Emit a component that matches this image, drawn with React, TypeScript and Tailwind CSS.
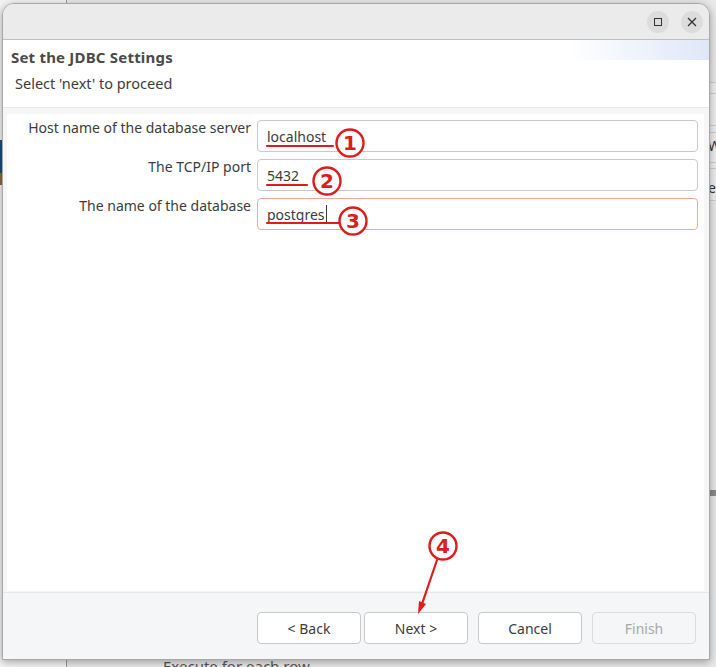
import React from "react";

const font = { fontFamily: '"Noto Sans", "Open Sans", sans-serif' };

function Field({ label, value, focused }: { label: string; value: string; focused?: boolean }) {
  return (
    <div className="flex items-start">
      <div className="w-[244px] shrink-0 text-right text-[14px] leading-[20px] text-[#3c3c3c]">{label}</div>
      <div
        className={
          "ml-[6px] mt-[2px] flex h-[32px] flex-1 items-center rounded-[4px] border bg-white pl-[9px] text-[14px] text-[#3c3c3c] " +
          (focused ? "border-[#f0a898]" : "border-[#c9c9c9]")
        }
      >
        <span>{value}</span>
        {focused && <span className="ml-[1px] inline-block h-[18px] w-[1px] bg-[#3c3c3c]" />}
      </div>
    </div>
  );
}

function Btn({ children, disabled, cls }: { children: React.ReactNode; disabled?: boolean; cls?: string }) {
  return (
    <div
      className={
        "flex h-[32px] w-[104px] items-center justify-center rounded-[4px] border text-[14px] " +
        (disabled ? "border-[#dcdcdc] bg-[#f5f6f7] text-[#a8a8a8] " : "border-[#c8c8c8] bg-white text-[#3c3c3c] ") +
        (cls || "")
      }
    >
      {children}
    </div>
  );
}

export default function App() {
  return (
    <div className="relative h-[667px] w-[716px] overflow-hidden bg-[#e9e9e9]" style={font}>
      {/* background app fragments */}
      <div className="absolute left-0 top-0 h-[667px] w-[67px] border-r border-[#9a9a9a] bg-[#f4f4f4]" />
      <div className="absolute left-0 top-[140px] h-[33px] w-[3px] bg-[#1d4e7e]" />
      <div className="absolute left-0 top-[173px] h-[12px] w-[3px] bg-[#8a6a3a]" />
      <div className="absolute left-[163px] top-[656px] text-[15px] leading-[20px] text-[#555]">Execute for each row.</div>
      <div className="absolute right-0 top-[82px] h-[120px] w-[8px] bg-[#efefef]">
        <div className="absolute left-0 top-0 h-[1px] w-full bg-[#cfcfcf]" />
        <div className="absolute left-0 top-[11px] h-[1px] w-full bg-[#cfcfcf]" />
        <div className="absolute left-0 top-[43px] h-[1px] w-full bg-[#cfcfcf]" />
        <div className="absolute left-0 top-[50px] h-[1px] w-full bg-[#cfcfcf]" />
        <div className="absolute left-0 top-[80px] h-[1px] w-full bg-[#cfcfcf]" />
        <div className="absolute left-0 top-[86px] h-[1px] w-full bg-[#cfcfcf]" />
        <div className="absolute left-0 top-[118px] h-[1px] w-full bg-[#cfcfcf]" />
        <div className="absolute left-0 top-[54px] text-[14px] leading-[20px] text-[#333]">Wi</div>
        <div className="absolute left-0 top-[96px] text-[14px] leading-[20px] text-[#333]">er</div>
      </div>
      <div className="absolute right-0 top-[490px] h-[6px] w-[8px] bg-[#8a8a8a]" />

      {/* dialog window */}
      <div className="absolute left-[2px] top-[3px] flex h-[657px] w-[708px] flex-col overflow-hidden rounded-t-[12px] border border-[#a8a8a8] bg-[#f6f6f7] shadow-[0_2px_8px_rgba(0,0,0,0.35)]">
        {/* title bar */}
        <div className="flex h-[36px] shrink-0 items-center justify-end gap-[12px] border-b border-[#bfbfbf] bg-[#ebebeb] pr-[6px]">
          <div className="flex h-[22px] w-[22px] items-center justify-center rounded-full bg-[#dcdcdc]">
            <div className="h-[8px] w-[8px] border border-[#333]" />
          </div>
          <div className="flex h-[22px] w-[22px] items-center justify-center rounded-full bg-[#dcdcdc]">
            <svg width="10" height="10" viewBox="0 0 10 10">
              <path d="M1 1 L9 9 M9 1 L1 9" stroke="#333" strokeWidth="1.3" />
            </svg>
          </div>
        </div>
        {/* header */}
        <div className="relative h-[68px] shrink-0 border-b border-[#e6e6e6] bg-white">
          <div className="absolute right-0 top-0 h-[20px] w-[140px] bg-gradient-to-r from-white to-[#dfe7f7]" />
          <div className="relative pl-[8px] pt-[6px] text-[15px] font-bold leading-[22px] tracking-[0.2px] text-[#4a4a4a]">
            Set the JDBC Settings
          </div>
          <div className="relative pl-[12px] pt-[4px] text-[14.5px] leading-[22px] text-[#3c3c3c]">
            Select 'next' to proceed
          </div>
        </div>
        {/* content */}
        <div className="flex flex-1 flex-col pb-[1px] pl-[4px] pr-[5px] pt-[6px]">
          <div className="flex flex-1 flex-col gap-[5px] bg-white pr-[6px] pt-[4px]">
            <Field label="Host name of the database server" value="localhost" />
            <Field label="The TCP/IP port" value="5432" />
            <Field label="The name of the database" value="postgres" focused />
          </div>
        </div>
        {/* footer */}
        <div className="flex h-[67px] shrink-0 items-start justify-end border-t border-[#e8e8e8] bg-[#f5f6f7] pr-[13px] pt-[19px]">
          <Btn>&lt; Back</Btn>
          <Btn cls="ml-[3px]">Next &gt;</Btn>
          <Btn cls="ml-[10px]">Cancel</Btn>
          <Btn disabled cls="ml-[10px]">Finish</Btn>
        </div>
      </div>

      {/* annotations */}
      <svg className="pointer-events-none absolute left-0 top-0" width="716" height="667" viewBox="0 0 716 667">
        <g stroke="#e01b1b" strokeWidth="2.2" strokeLinecap="round">
          <line x1="267" y1="146" x2="333" y2="146" />
          <line x1="267" y1="185" x2="307" y2="185" />
          <line x1="267" y1="223" x2="339" y2="223" />
          <line x1="437" y1="560" x2="422" y2="604" />
        </g>
        <polygon points="418,614 419,601 426,604" fill="#e01b1b" />
        {[
          { cx: 350, cy: 143, n: "1" },
          { cx: 327, cy: 181, n: "2" },
          { cx: 353, cy: 221, n: "3" },
          { cx: 443, cy: 546, n: "4" },
        ].map((c) => (
          <g key={c.n}>
            <circle cx={c.cx} cy={c.cy} r="13.5" fill="white" stroke="#e01b1b" strokeWidth="2.4" />
            <text
              x={c.cx}
              y={c.cy + 7}
              textAnchor="middle"
              fontSize="20"
              fontWeight="700"
              fill="#e01b1b"
              fontFamily='"DejaVu Sans", sans-serif'
            >
              {c.n}
            </text>
          </g>
        ))}
      </svg>
    </div>
  );
}
